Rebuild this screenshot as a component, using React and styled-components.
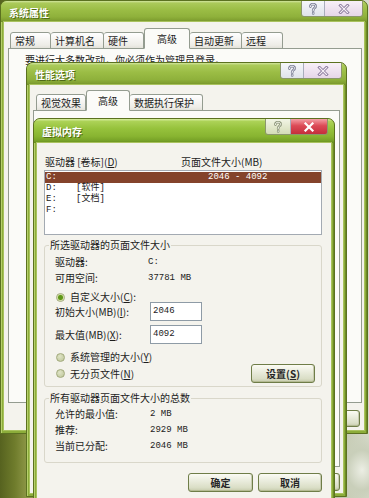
import React from 'react';
import styled, { createGlobalStyle, css } from 'styled-components';

const GlobalStyle = createGlobalStyle`
  html, body { margin: 0; padding: 0; }
  body {
    width: 369px;
    height: 498px;
    overflow: hidden;
    font-family: "Noto Sans CJK SC", "Noto Sans", sans-serif;
    font-size: 10px;
    color: #1c1c1c;
  }
`;

const mono = `"Liberation Mono", "Noto Sans CJK SC", monospace`;

// desktop + windows
const Desktop = styled.div`
  position: relative;
  width: 369px;
  height: 498px;
  overflow: hidden;
  background:
    radial-gradient(ellipse 30px 40px at 362px 470px, #eceee4 0, #c9cfba 50%, transparent 100%),
    linear-gradient(90deg, #56621f 0%, #6f7c2c 4%, #8a9444 7%, #9da368 40%, #b9c0a2 90%, #d9dccd 100%);
`;

const Frame = styled.div`
  position: absolute;
  left: ${p => p.$x}px;
  top: ${p => p.$y}px;
  width: ${p => p.$w}px;
  height: ${p => p.$h}px;
  box-sizing: border-box;
  display: flex;
  flex-direction: column;
  border: 1px solid #5b7120;
  border-radius: 7px 7px 0 0;
  background: #8cad3a;
  box-shadow: inset 1px 0 #b7d06c, inset -1px 0 #6d8a26;
`;

const TitleBar = styled.div`
  height: ${p => p.$h}px;
  flex: none;
  display: flex;
  align-items: center;
  padding: 0 ${p => p.$capRight}px 0 8px;
  border-radius: 6px 6px 0 0;
  background: ${p => p.$active
    ? 'linear-gradient(180deg, #d9efa2 0%, #acd257 10%, #96c23c 40%, #88b431 72%, #77a227 90%, #668d1f 100%)'
    : 'linear-gradient(180deg, #d2e59e 0%, #abca5a 10%, #9bbd45 42%, #8fb13b 75%, #7f9f30 92%, #6f8d27 100%)'};
`;

const Title = styled.span`
  flex: 1;
  color: #fff;
  font-weight: bold;
  font-size: 10px;
  line-height: 12px;
  padding-top: 2px;
  text-shadow: 1px 1px 0 #4f6a16;
`;

const Caps = styled.div`
  align-self: flex-start;
  display: flex;
  height: 16px;
  box-sizing: border-box;
  border: 1px solid #8b976c;
  border-top: none;
  border-radius: 0 0 3px 3px;
  overflow: hidden;
`;

const CapButton = styled.div`
  width: ${p => p.$w}px;
  height: 100%;
  display: flex;
  align-items: center;
  justify-content: center;
  ${p => p.$kind === 'help' && css`
    border-right: 1px solid #a9adbc;
    background: ${p.$active
      ? 'linear-gradient(#f2f5e6, #d4dcb6)'
      : 'linear-gradient(#f6f7fb, #dfe3eb)'};
  `}
  ${p => p.$kind === 'close' && css`
    background: ${p.$active
      ? 'linear-gradient(#f4a0a6 0%, #dc4a56 45%, #c42e3c 100%)'
      : 'linear-gradient(#f8f0f8, #e6d6e8)'};
  `}
`;

const WindowBody = styled.div`
  flex: 1;
  min-height: 0;
  display: flex;
  flex-direction: column;
  margin: 0 3px 3px;
  padding: ${p => p.$pad};
  background: #f4f3ed;
  box-shadow: 0 0 0 1px #a9c25e;
`;

const HelpGlyph = ({ active }) => (
  <svg width="10" height="12" viewBox="0 0 10 12">
    <path d="M2.4 3.6C2.4 2 3.6 1.2 5 1.2S7.6 2 7.6 3.4C7.6 5 5.2 5.2 5.2 7V7.8M5.2 9.9V10.5"
      fill="none" stroke={active ? '#8c957a' : '#7d8196'} strokeWidth="2.6" strokeLinecap="round" />
    <path d="M2.4 3.6C2.4 2 3.6 1.2 5 1.2S7.6 2 7.6 3.4C7.6 5 5.2 5.2 5.2 7V7.8M5.2 9.9V10.5"
      fill="none" stroke={active ? '#f2f4e8' : '#f1f2f8'} strokeWidth="1" strokeLinecap="round" />
  </svg>
);

const CloseGlyph = ({ active }) => (
  <svg width="12" height="10" viewBox="0 0 12 10">
    {active ? (
      <path d="M2.5 1.5L9.5 8.5M9.5 1.5L2.5 8.5" stroke="#fff" strokeWidth="2.2" strokeLinecap="square" />
    ) : (
      <>
        <path d="M2.5 1.5L9.5 8.5M9.5 1.5L2.5 8.5" stroke="#8c7d9e" strokeWidth="3" strokeLinecap="square" />
        <path d="M2.5 1.5L9.5 8.5M9.5 1.5L2.5 8.5" stroke="#f6eef6" strokeWidth="1.1" strokeLinecap="square" />
      </>
    )}
  </svg>
);

const Window = ({ x, y, w, h, title, titleH, active, capW, capRight, pad, children }) => (
  <Frame $x={x} $y={y} $w={w} $h={h}>
    <TitleBar $h={titleH} $active={active} $capRight={capRight}>
      <Title>{title}</Title>
      <Caps>
        <CapButton $kind="help" $active={active} $w={capW[0]}><HelpGlyph active={active} /></CapButton>
        <CapButton $kind="close" $active={active} $w={capW[1]}><CloseGlyph active={active} /></CapButton>
      </Caps>
    </TitleBar>
    <WindowBody $pad={pad}>{children}</WindowBody>
  </Frame>
);

// tabs
const TabStrip = styled.div`
  display: flex;
  align-items: flex-end;
  height: 20px;
  padding-left: ${p => p.$indent}px;
  margin-bottom: -1px;
  position: relative;
  z-index: 1;
`;

const Tab = styled.div`
  width: ${p => p.$w}px;
  height: ${p => (p.$active ? 21 : 17)}px;
  box-sizing: border-box;
  display: flex;
  align-items: center;
  justify-content: ${p => (p.$active ? 'center' : 'flex-start')};
  padding-left: ${p => (p.$active ? 0 : 4)}px;
  border: 1px solid #949c90;
  border-left-width: ${p => (p.$first || p.$active ? 1 : 0)}px;
  border-bottom: ${p => (p.$active ? '1px solid #fbfbf8' : '1px solid #949c90')};
  border-radius: 3px 3px 0 0;
  background: ${p => (p.$active ? '#fbfbf8' : 'linear-gradient(#ffffff, #eeede7 80%, #e3e2da)')};
  line-height: 12px;
  white-space: nowrap;
`;

const TabPanel = styled.div`
  flex: 1;
  min-height: 0;
  border: 1px solid #949c90;
  background: #fbfbf8;
  padding: ${p => p.$pad || '0'};
  line-height: 12px;
`;

const ButtonRow = styled.div`
  display: flex;
  justify-content: flex-end;
  gap: ${p => p.$gap}px;
  margin-top: ${p => p.$top}px;
  padding-right: ${p => p.$right || 0}px;
`;

const PushButton = styled.div`
  width: ${p => p.$w}px;
  height: ${p => p.$h}px;
  box-sizing: border-box;
  display: flex;
  align-items: center;
  justify-content: center;
  border: 1px solid #6f7d48;
  border-radius: 3px;
  background: linear-gradient(#fbfbf4 0%, #eceee0 35%, #dadec6 80%, #c6cbac 100%);
  box-shadow: inset 0 -1px #b5bb94, inset -1px 0 #c7cbb0;
  font-weight: bold;
  color: #262626;
  line-height: 12px;
`;

// virtual memory dialog parts
const ColumnHead = styled.div`
  display: grid;
  grid-template-columns: 136px auto;
  padding-left: 1px;
  line-height: 12px;
`;

const ListBox = styled.div`
  margin-top: 2px;
  height: 65px;
  box-sizing: border-box;
  border: 1px solid #a3aab2;
  background: #fff;
  padding-top: 1px;
`;

const DriveRow = styled.div`
  display: grid;
  grid-template-columns: 30px 132px auto;
  height: 11px;
  line-height: 11px;
  padding-left: 1px;
  font-family: ${mono};
  font-size: 9px;
  white-space: pre;
  color: ${p => (p.$sel ? '#fff' : '#202020')};
  background: ${p => (p.$sel ? '#84432b' : 'transparent')};
`;

const Group = styled.fieldset`
  margin: ${p => p.$top}px 0 0;
  min-width: 0;
  padding: ${p => p.$pad};
  border: 1px solid #d9d7ca;
  border-radius: 3px;
  display: flex;
  flex-direction: column;
`;

const Legend = styled.legend`
  padding: 0 1px;
  margin-left: -6px;
  line-height: 12px;
  font-size: 10px;
`;

const InfoGrid = styled.div`
  display: grid;
  grid-template-columns: ${p => p.$label}px auto;
  grid-auto-rows: 16px;
  align-items: center;
  line-height: 12px;
`;

const Value = styled.span`
  font-family: ${mono};
  font-size: 9px;
`;

const RadioRow = styled.div`
  display: flex;
  align-items: center;
  height: ${p => p.$h || 12}px;
  margin-top: ${p => p.$top}px;
  line-height: 12px;
`;

const RadioDot = styled.span`
  width: 9px;
  height: 9px;
  margin: 0 5px 0 1px;
  box-sizing: border-box;
  border-radius: 50%;
  border: 1px solid #a2aa7c;
  background: ${p => (p.$on
    ? 'radial-gradient(circle, #5f961a 0 2px, #9cc050 2.6px, #e4ebc8 3.2px)'
    : 'radial-gradient(circle at 40% 35%, #dfe4c6, #bcc497)')};
`;

const FieldRow = styled.div`
  display: grid;
  grid-template-columns: 95px 52px;
  align-items: center;
  height: 19px;
  margin-top: ${p => p.$top}px;
  line-height: 12px;
`;

const TextBox = styled.div`
  height: 19px;
  box-sizing: border-box;
  border: 1px solid #8e9ba6;
  background: #fff;
  padding: 2px 2px 0;
  font-family: ${mono};
  font-size: 9px;
  line-height: 12px;
`;

const SplitRow = styled.div`
  display: flex;
  align-items: center;
  justify-content: space-between;
  height: 19px;
  margin-top: 1px;
  line-height: 12px;
`;

const Label = styled.span`
  display: flex;
  align-items: center;
`;

const drives = [
  { d: 'C:', label: '', size: '2046 - 4092', sel: true },
  { d: 'D:', label: '[软件]', size: '' },
  { d: 'E:', label: '[文档]', size: '' },
  { d: 'F:', label: '', size: '' },
];

const sysTabs = [
  { t: '常规', w: 41 },
  { t: '计算机名', w: 53 },
  { t: '硬件', w: 40 },
  { t: '高级', w: 46, active: true },
  { t: '自动更新', w: 52 },
  { t: '远程', w: 41 },
];

const perfTabs = [
  { t: '视觉效果', w: 50 },
  { t: '高级', w: 44, active: true },
  { t: '数据执行保护', w: 73 },
];

const Tabs = ({ items, indent }) => (
  <TabStrip $indent={indent}>
    {items.map((it, i) => (
      <Tab key={it.t} $w={it.w} $active={it.active} $first={i === 0}>{it.t}</Tab>
    ))}
  </TabStrip>
);

export default function App() {
  return (
    <>
      <GlobalStyle />
      <Desktop>
        <Window x={0} y={0} w={368} h={434} title="系统属性" titleH={21}
          capW={[22, 37]} capRight={4} pad="7px 2px 3px 4px">
          <Tabs items={sysTabs} indent={2} />
          <TabPanel $pad="5px 0 0 16px">要进行大多数改动，你必须作为管理员登录。</TabPanel>
          <ButtonRow $gap={6} $top={7} $right={2}>
            <PushButton $w={66} $h={17} />
            <PushButton $w={66} $h={17} />
            <PushButton $w={66} $h={17} />
          </ButtonRow>
        </Window>

        <Window x={26} y={62} w={321} h={435} title="性能选项" titleH={22}
          capW={[22, 37]} capRight={4} pad="6px 3px 2px 3px">
          <Tabs items={perfTabs} indent={3} />
          <TabPanel />
          <ButtonRow $gap={6} $top={6}>
            <PushButton $w={64} $h={18} />
            <PushButton $w={64} $h={18} />
          </ButtonRow>
        </Window>

        <Window x={33} y={118} w={302} h={384} title="虚拟内存" titleH={24} active
          capW={[24, 36]} capRight={6} pad="13px 9px 4px 7px">
          <ColumnHead>
            <span>驱动器 [卷标](<u>D</u>)</span>
            <span>页面文件大小(MB)</span>
          </ColumnHead>
          <ListBox>
            {drives.map(r => (
              <DriveRow key={r.d} $sel={r.sel}>
                <span>{r.d}</span>
                <span>{r.label}</span>
                <span>{r.size}</span>
              </DriveRow>
            ))}
          </ListBox>

          <Group $top={4} $pad="3px 6px 3px 10px">
            <Legend>所选驱动器的页面文件大小</Legend>
            <InfoGrid $label={93}>
              <span>驱动器:</span><Value>C:</Value>
              <span>可用空间:</span><Value>37781 MB</Value>
            </InfoGrid>
            <RadioRow $top={5}><RadioDot $on />自定义大小(<u>C</u>):</RadioRow>
            <FieldRow $top={-1}>
              <span>初始大小(MB)(<u>I</u>):</span>
              <TextBox>2046</TextBox>
            </FieldRow>
            <FieldRow $top={4}>
              <span>最大值(MB)(<u>X</u>):</span>
              <TextBox>4092</TextBox>
            </FieldRow>
            <RadioRow $top={7}><RadioDot />系统管理的大小(<u>Y</u>)</RadioRow>
            <SplitRow>
              <Label><RadioDot />无分页文件(<u>N</u>)</Label>
              <PushButton $w={64} $h={19}>设置(<u>S</u>)</PushButton>
            </SplitRow>
          </Group>

          <Group $top={5} $pad="2px 6px 8px 10px">
            <Legend>所有驱动器页面文件大小的总数</Legend>
            <InfoGrid $label={95}>
              <span>允许的最小值:</span><Value>2 MB</Value>
              <span>推荐:</span><Value>2929 MB</Value>
              <span>当前已分配:</span><Value>2046 MB</Value>
            </InfoGrid>
          </Group>

          <ButtonRow $gap={5} $top={10}>
            <PushButton $w={65} $h={19}>确定</PushButton>
            <PushButton $w={64} $h={19}>取消</PushButton>
          </ButtonRow>
        </Window>
      </Desktop>
    </>
  );
}
